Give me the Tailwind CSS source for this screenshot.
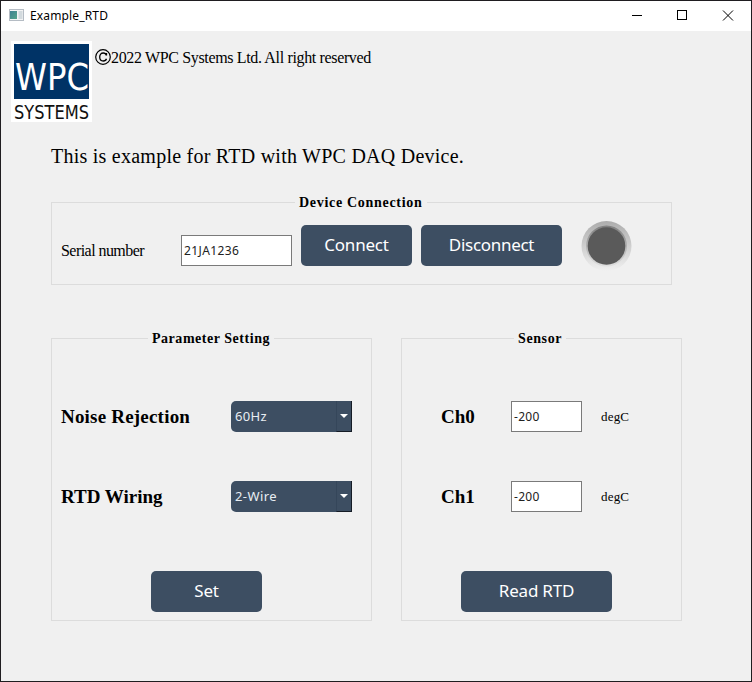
<!DOCTYPE html>
<html lang="en">
<head>
<meta charset="utf-8">
<title>Example_RTD</title>
<script src="https://cdn.jsdelivr.net/npm/@tailwindcss/browser@4"></script>
</head>
<body class="w-[752px] h-[682px] overflow-hidden">
<div class="flex flex-col w-[752px] h-[682px] border border-[#1f1d20] bg-[#f0f0f0] text-black font-['Liberation_Serif',serif]">
  <header class="flex h-[30px] shrink-0 items-center bg-white pl-2 font-['Noto_Sans',sans-serif]">
    <svg class="mr-[6px] -mt-[2px]" width="15" height="12" viewBox="0 0 15 12">
      <defs><linearGradient id="app" x1="0" y1="0" x2="1" y2="1"><stop offset="0" stop-color="#3f8291"/><stop offset="1" stop-color="#55a48a"/></linearGradient></defs>
      <rect x=".5" y=".5" width="14" height="11" fill="#f4f4f4" stroke="#b5bcc4"/>
      <rect x="1" y="2" width="7" height="8" fill="url(#app)"/>
      <path d="M9.5 2h4v8h-4z" fill="#d3dade"/>
    </svg>
    <span class="grow text-[12px] tracking-[0.15px]">Example_RTD</span>
    <svg width="120" height="30" viewBox="0 0 120 30" fill="none" stroke="#000" shape-rendering="crispEdges">
      <path d="M1 14.5h10"/><rect x="46.500" y="9.500" width="9" height="9"/>
      <path d="M92 9.500l10 10M102 9.500l-10 10" shape-rendering="auto"/>
    </svg>
  </header>
  <main class="flex flex-col pl-[10px] pt-[10px]">
    <div class="flex h-[81px]">
      <svg class="shrink-0 overflow-visible" width="81" height="81" viewBox="0 0 81 81" font-family="DejaVu Sans, sans-serif">
        <rect width="81" height="81" fill="#fff"/>
        <rect x="3" y="3" width="75" height="55" fill="#003366"/>
        <text x="4" y="49" font-size="37" fill="#fff" textLength="74" lengthAdjust="spacingAndGlyphs">WPC</text>
        <text x="3" y="78" font-size="19" fill="#111" textLength="75" lengthAdjust="spacingAndGlyphs">SYSTEMS</text>
      </svg>
      <p class="flex ml-[3px] mt-[6px] h-5 items-center text-[16px] leading-5 whitespace-nowrap">
        <svg width="16" height="16" viewBox="0 0 16 16" fill="none" stroke="#000"><circle cx="8" cy="8" r="7.300" stroke-width="1.200"/><path d="M11.500 6.500C11 4.700 9.800 4 8.300 4 6 4 4.700 5.700 4.700 8s1.400 4 3.600 4c1.600 0 2.800-.9 3.200-2.300M11.500 4v2.500" stroke-width="1.300"/></svg>
        <span class="pt-px tracking-[-0.350px]">2022 WPC Systems Ltd. All right reserved</span>
      </p>
    </div>
    <h1 class="ml-10 mt-[20px] h-7 text-[20px] leading-7 tracking-[0.245px] whitespace-nowrap">This is example for RTD with WPC DAQ Device.</h1>
    <section class="relative flex items-start ml-10 mt-[32px] w-[621px] h-[83px] border border-[#dcdcdc] pl-[9px] pt-[22px]">
      <h2 class="absolute left-[243px] -top-[8px] px-[4px] bg-[#f0f0f0] text-[14px] leading-4 font-bold tracking-[0.7px] whitespace-nowrap">Device Connection</h2>
      <label class="w-[120px] mt-4 text-[16px] leading-5 tracking-[-0.550px]">Serial number</label>
      <div class="mt-[10px] mr-[9px] flex items-center w-[111px] h-[31px] border border-[#7a7a7a] bg-white pl-[2px] text-[12px] tracking-[0.4px] text-[#222] font-['Noto_Sans',sans-serif]">21JA1236</div>
      <button class="mr-[9px] w-[111px] h-[41px] rounded-[5px] bg-[#3d4e62] text-white text-[17px] tracking-[-0.200px] pb-[1px] font-['Noto_Sans',sans-serif]">Connect</button>
      <button class="mr-[19px] w-[141px] h-[41px] rounded-[5px] bg-[#3d4e62] text-white text-[17px] tracking-[-0.300px] pb-[1px] font-['Noto_Sans',sans-serif]">Disconnect</button>
      <svg class="-mt-[4px]" width="51" height="51" viewBox="0 0 51 51">
        <defs>
          <linearGradient id="ring" x1="0" y1="0" x2="0" y2="1"><stop offset="0" stop-color="#adadad"/><stop offset="1" stop-color="#f0f0f0"/></linearGradient>
          <linearGradient id="inner" x1="0" y1="0" x2="0" y2="1"><stop offset="0" stop-color="#7f7f7f"/><stop offset="1" stop-color="#e0e0e0"/></linearGradient>
        </defs>
        <circle cx="25.500" cy="25" r="25" fill="url(#ring)"/>
        <circle cx="25.500" cy="25" r="20.500" fill="url(#inner)"/>
        <circle cx="25.500" cy="25" r="18.800" fill="#5a5a5a"/>
      </svg>
    </section>
    <div class="flex ml-10 mt-[53px] gap-[29px]">
      <section class="relative flex flex-col w-[321px] h-[283px] border border-[#dcdcdc] pl-[9px] pt-[62px]">
        <h2 class="absolute left-[96px] -top-[8px] px-[4px] bg-[#f0f0f0] text-[14px] leading-4 font-bold tracking-[0.530px] whitespace-nowrap">Parameter Setting</h2>
        <div class="flex items-center h-[31px] mb-[49px]">
          <span class="w-[170px] text-[19px] leading-6 font-bold tracking-[0.2px]">Noise Rejection</span>
          <div class="flex w-[121px] h-[31px] items-center rounded-l-[5px] bg-[#3d4e62] pl-1 text-[13px] tracking-[0.3px] text-[#e8edf2] font-['Noto_Sans',sans-serif]"><span class="grow">60Hz</span><span class="flex w-4 h-[31px] items-center justify-center border-r border-b border-l border-r-[#151c26] border-b-[#151c26] border-l-[#35465a]"><svg width="8" height="4" viewBox="0 0 8 4" fill="#fff"><path d="M0 0h8L4 4z"/></svg></span></div>
        </div>
        <div class="flex items-center h-[31px] mb-[59px]">
          <span class="w-[170px] text-[19px] leading-6 font-bold">RTD Wiring</span>
          <div class="flex w-[121px] h-[31px] items-center rounded-l-[5px] bg-[#3d4e62] pl-1 text-[13px] tracking-[0.4px] text-[#e8edf2] font-['Noto_Sans',sans-serif]"><span class="grow">2-Wire</span><span class="flex w-4 h-[31px] items-center justify-center border-r border-b border-l border-r-[#151c26] border-b-[#151c26] border-l-[#35465a]"><svg width="8" height="4" viewBox="0 0 8 4" fill="#fff"><path d="M0 0h8L4 4z"/></svg></span></div>
        </div>
        <button class="ml-[90px] w-[111px] h-[41px] rounded-[5px] bg-[#3d4e62] text-white text-[17px] tracking-[-0.200px] pb-[1px] font-['Noto_Sans',sans-serif]">Set</button>
      </section>
      <section class="relative flex flex-col w-[281px] h-[283px] border border-[#dcdcdc] pl-[39px] pt-[62px]">
        <h2 class="absolute left-[112px] -top-[8px] px-[4px] bg-[#f0f0f0] text-[14px] leading-4 font-bold tracking-[0.6px] whitespace-nowrap">Sensor</h2>
        <div class="flex items-center h-[31px] mb-[49px]">
          <span class="w-[70px] text-[19px] leading-6 font-bold">Ch0</span>
          <div class="flex items-center w-[71px] h-[31px] mr-[19px] border border-[#7a7a7a] bg-white pl-[2px] text-[12px] tracking-[0.3px] text-[#222] font-['Noto_Sans',sans-serif]">-200</div>
          <span class="text-[13px] leading-4 tracking-[0.2px]">degC</span>
        </div>
        <div class="flex items-center h-[31px] mb-[59px]">
          <span class="w-[70px] text-[19px] leading-6 font-bold">Ch1</span>
          <div class="flex items-center w-[71px] h-[31px] mr-[19px] border border-[#7a7a7a] bg-white pl-[2px] text-[12px] tracking-[0.3px] text-[#222] font-['Noto_Sans',sans-serif]">-200</div>
          <span class="text-[13px] leading-4 tracking-[0.2px]">degC</span>
        </div>
        <button class="ml-[20px] w-[151px] h-[41px] rounded-[5px] bg-[#3d4e62] text-white text-[17px] tracking-[-0.200px] pb-[1px] font-['Noto_Sans',sans-serif]">Read RTD</button>
      </section>
    </div>
  </main>
</div>
</body>
</html>
